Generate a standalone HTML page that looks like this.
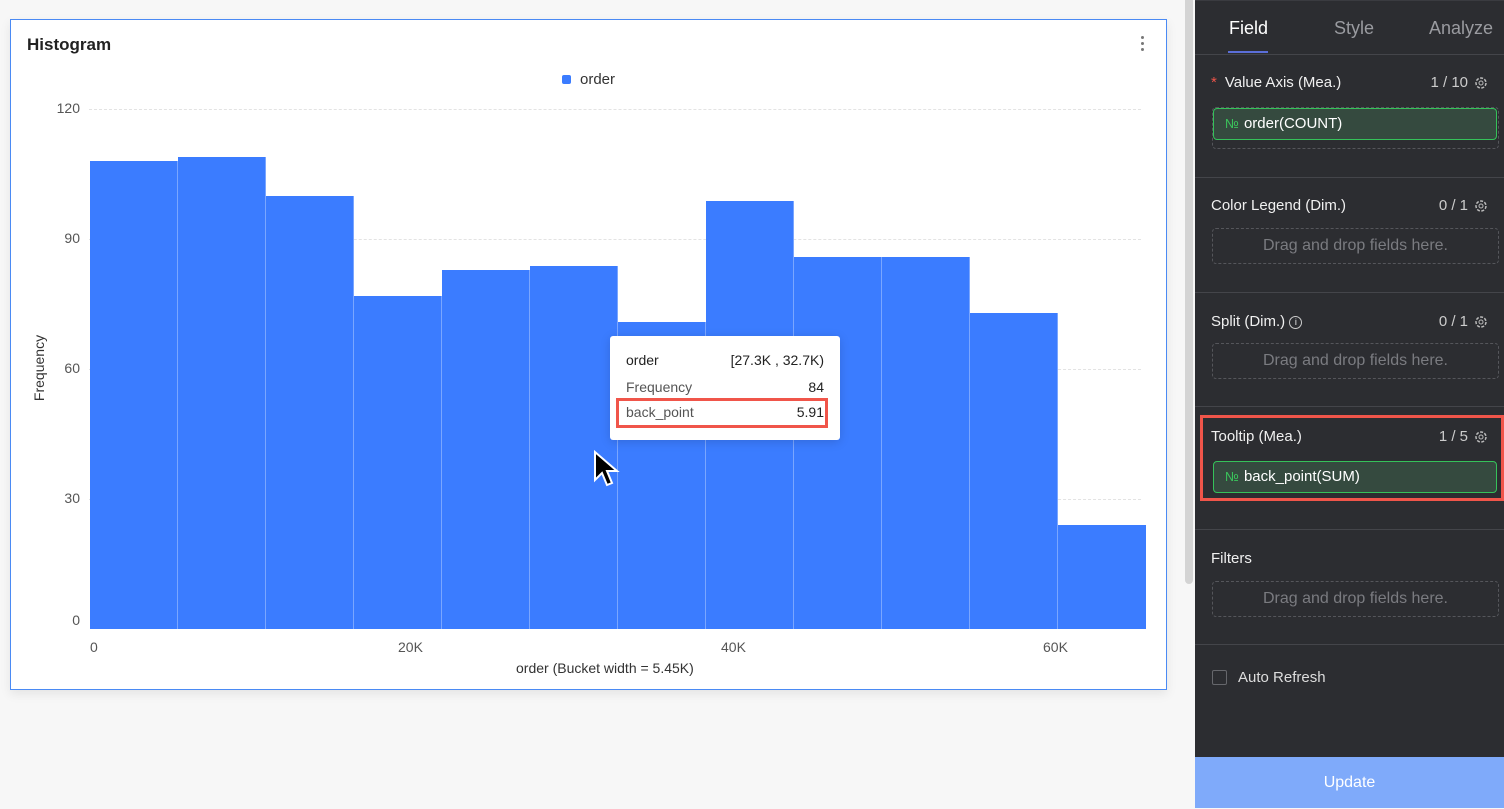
<!DOCTYPE html>
<html><head><meta charset="utf-8">
<style>
*{margin:0;padding:0;box-sizing:border-box}
body{width:1504px;height:808px;overflow:hidden;background:#f7f7f7;font-family:"Liberation Sans",sans-serif;position:relative}
.abs{position:absolute}
.card{left:10px;top:19px;width:1157px;height:671px;background:#fff;border:1px solid #4a8af4;box-shadow:0 4px 10px rgba(0,0,0,.08)}
.bar{position:absolute;background:#3b7cff;border-right:1px solid #7aa6ff;bottom:71px}
.grid{position:absolute;left:89px;width:1052px;border-top:1px dashed #e3e3e3}
.yl{position:absolute;width:70px;text-align:right;font-size:14px;color:#555;left:0}
.xl{position:absolute;font-size:14px;color:#555;top:639px}
.panel{left:1195px;top:0;width:309px;height:808px;background:#2c2d31;color:#fff}
.sec{position:absolute;left:0;width:309px;border-top:1px solid #44454a}
.lab{position:absolute;left:16px;font-size:15px;color:#f0f0f0}
.cnt{position:absolute;right:16px;font-size:15px;color:#ccc;display:flex;align-items:center;gap:6px}
.drop{position:absolute;left:17px;width:287px;height:36px;border:1px dashed #55565b;border-radius:4px;color:#7a7b80;font-size:16px;text-align:center;line-height:34px}
.pill{position:absolute;left:18px;width:284px;height:32px;background:#354a3f;border:1px solid #35c25a;border-radius:4px;font-size:15px;color:#fff;line-height:30px;padding-left:11px}
.pill b{color:#3bc55c;font-weight:normal;font-size:13px;margin-right:5px}
</style></head><body>
<div class="abs card">
  <div class="abs" style="left:16px;top:15px;font-size:17px;font-weight:bold;color:#222">Histogram</div>
  <div class="abs" style="left:1130px;top:16px;width:3px"><div style="width:3px;height:3px;background:#777;border-radius:50%;margin-bottom:3px"></div><div style="width:3px;height:3px;background:#777;border-radius:50%;margin-bottom:3px"></div><div style="width:3px;height:3px;background:#777;border-radius:50%"></div></div>
  <div class="abs" style="left:551px;top:51px;font-size:15px;color:#333;display:flex;align-items:center"><span style="width:9px;height:9px;background:#3b7cff;border-radius:2px;margin-right:9px"></span>order</div>
</div>
<div class="abs" style="left:0;top:0;width:1170px;height:700px">
  <div class="grid" style="top:109px"></div><div class="grid" style="top:239px"></div><div class="grid" style="top:369px"></div><div class="grid" style="top:499px"></div>
  <div class="yl" style="top:100px;left:10px">120</div>
  <div class="yl" style="top:230px;left:10px">90</div>
  <div class="yl" style="top:360px;left:10px">60</div>
  <div class="yl" style="top:490px;left:10px">30</div>
  <div class="yl" style="top:612px;left:10px">0</div>
  <div class="abs" style="left:-6px;top:360px;transform:rotate(-90deg);font-size:14px;color:#333;width:90px;text-align:center">Frequency</div>
  <div class="bar" style="left:90px;width:88px;top:161px"></div>
  <div class="bar" style="left:178px;width:88px;top:157px"></div>
  <div class="bar" style="left:266px;width:88px;top:196px"></div>
  <div class="bar" style="left:354px;width:88px;top:296px"></div>
  <div class="bar" style="left:442px;width:88px;top:270px"></div>
  <div class="bar" style="left:530px;width:88px;top:266px"></div>
  <div class="bar" style="left:618px;width:88px;top:322px"></div>
  <div class="bar" style="left:706px;width:88px;top:201px"></div>
  <div class="bar" style="left:794px;width:88px;top:257px"></div>
  <div class="bar" style="left:882px;width:88px;top:257px"></div>
  <div class="bar" style="left:970px;width:88px;top:313px"></div>
  <div class="bar" style="left:1058px;width:88px;top:525px;border-right:none"></div>
  <div class="xl" style="left:90px">0</div>
  <div class="xl" style="left:398px">20K</div>
  <div class="xl" style="left:721px">40K</div>
  <div class="xl" style="left:1043px">60K</div>
  <div class="abs" style="left:516px;top:660px;font-size:14px;color:#333">order (Bucket width = 5.45K)</div>
  <div class="abs" style="left:610px;top:336px;width:230px;height:104px;background:#fff;border-radius:3px;box-shadow:0 2px 10px rgba(0,0,0,.15);font-size:14px">
    <div class="abs" style="left:16px;top:16px;color:#222">order</div><div class="abs" style="right:16px;top:16px;color:#222">[27.3K , 32.7K)</div>
    <div class="abs" style="left:16px;top:43px;color:#555">Frequency</div><div class="abs" style="right:16px;top:43px;color:#222">84</div>
    <div class="abs" style="left:6px;top:62px;width:212px;height:30px;border:3px solid #f0554a"></div>
    <div class="abs" style="left:16px;top:68px;color:#555">back_point</div><div class="abs" style="right:16px;top:68px;color:#222">5.91</div>
  </div>
  <svg class="abs" style="left:590px;top:448px" width="32" height="42"><path d="M5 4 L5 32 L12 25 L17 37 L22 35 L17 23 L27 23 Z" fill="#000" stroke="#fff" stroke-width="2"/></svg>
</div>
<div class="abs" style="left:1185px;top:0;width:8px;height:584px;background:#d4d4d4;border-radius:0 0 4px 4px"></div>
<div class="abs panel">
  <div class="sec" style="top:0;border-color:#3a3b40"></div>
  <div class="abs" style="left:34px;top:18px;font-size:18px;color:#fff">Field</div>
  <div class="abs" style="left:33px;top:51px;width:40px;height:2px;background:#5b6ed8"></div>
  <div class="abs" style="left:139px;top:18px;font-size:18px;color:#9a9ba0">Style</div>
  <div class="abs" style="left:234px;top:18px;font-size:18px;color:#9a9ba0">Analyze</div>
  <div class="sec" style="top:54px"></div>
  <div class="lab" style="top:74px"><span style="color:#f0554a;margin-right:8px">*</span>Value Axis (Mea.)</div>
  <div class="cnt" style="top:74px">1 / 10 <svg width="14" height="14"><circle cx="7" cy="7" r="5" fill="none" stroke="#bbb" stroke-width="1.5" stroke-dasharray="3 1.5"/><circle cx="7" cy="7" r="2" fill="none" stroke="#bbb"/></svg></div>
  <div class="drop" style="top:107px;height:42px"></div>
  <div class="pill" style="top:108px"><b>№</b>order(COUNT)</div>
  <div class="sec" style="top:177px"></div>
  <div class="lab" style="top:197px">Color Legend (Dim.)</div>
  <div class="cnt" style="top:197px">0 / 1 <svg width="14" height="14"><circle cx="7" cy="7" r="5" fill="none" stroke="#bbb" stroke-width="1.5" stroke-dasharray="3 1.5"/><circle cx="7" cy="7" r="2" fill="none" stroke="#bbb"/></svg></div>
  <div class="drop" style="top:228px">Drag and drop fields here.</div>
  <div class="sec" style="top:292px"></div>
  <div class="lab" style="top:313px">Split (Dim.) <span style="display:inline-block;width:13px;height:13px;border:1px solid #ccc;border-radius:50%;font-size:9px;text-align:center;line-height:11px;vertical-align:middle">i</span></div>
  <div class="cnt" style="top:313px">0 / 1 <svg width="14" height="14"><circle cx="7" cy="7" r="5" fill="none" stroke="#bbb" stroke-width="1.5" stroke-dasharray="3 1.5"/><circle cx="7" cy="7" r="2" fill="none" stroke="#bbb"/></svg></div>
  <div class="drop" style="top:343px">Drag and drop fields here.</div>
  <div class="sec" style="top:406px"></div>
  <div class="abs" style="left:5px;top:415px;width:304px;height:86px;border:3px solid #f0554a"></div>
  <div class="lab" style="top:428px">Tooltip (Mea.)</div>
  <div class="cnt" style="top:428px">1 / 5 <svg width="14" height="14"><circle cx="7" cy="7" r="5" fill="none" stroke="#bbb" stroke-width="1.5" stroke-dasharray="3 1.5"/><circle cx="7" cy="7" r="2" fill="none" stroke="#bbb"/></svg></div>
  <div class="pill" style="top:461px"><b>№</b>back_point(SUM)</div>
  <div class="sec" style="top:529px"></div>
  <div class="lab" style="top:550px">Filters</div>
  <div class="drop" style="top:581px">Drag and drop fields here.</div>
  <div class="sec" style="top:644px"></div>
  <div class="abs" style="left:17px;top:670px;width:15px;height:15px;border:1px solid #66676c;border-radius:2px"></div>
  <div class="abs" style="left:43px;top:669px;font-size:15px;color:#ddd">Auto Refresh</div>
  <div class="abs" style="left:0;top:757px;width:309px;height:51px;background:#7faafa;color:#fff;font-size:16px;text-align:center;line-height:52px">Update</div>
</div>
</body></html>
